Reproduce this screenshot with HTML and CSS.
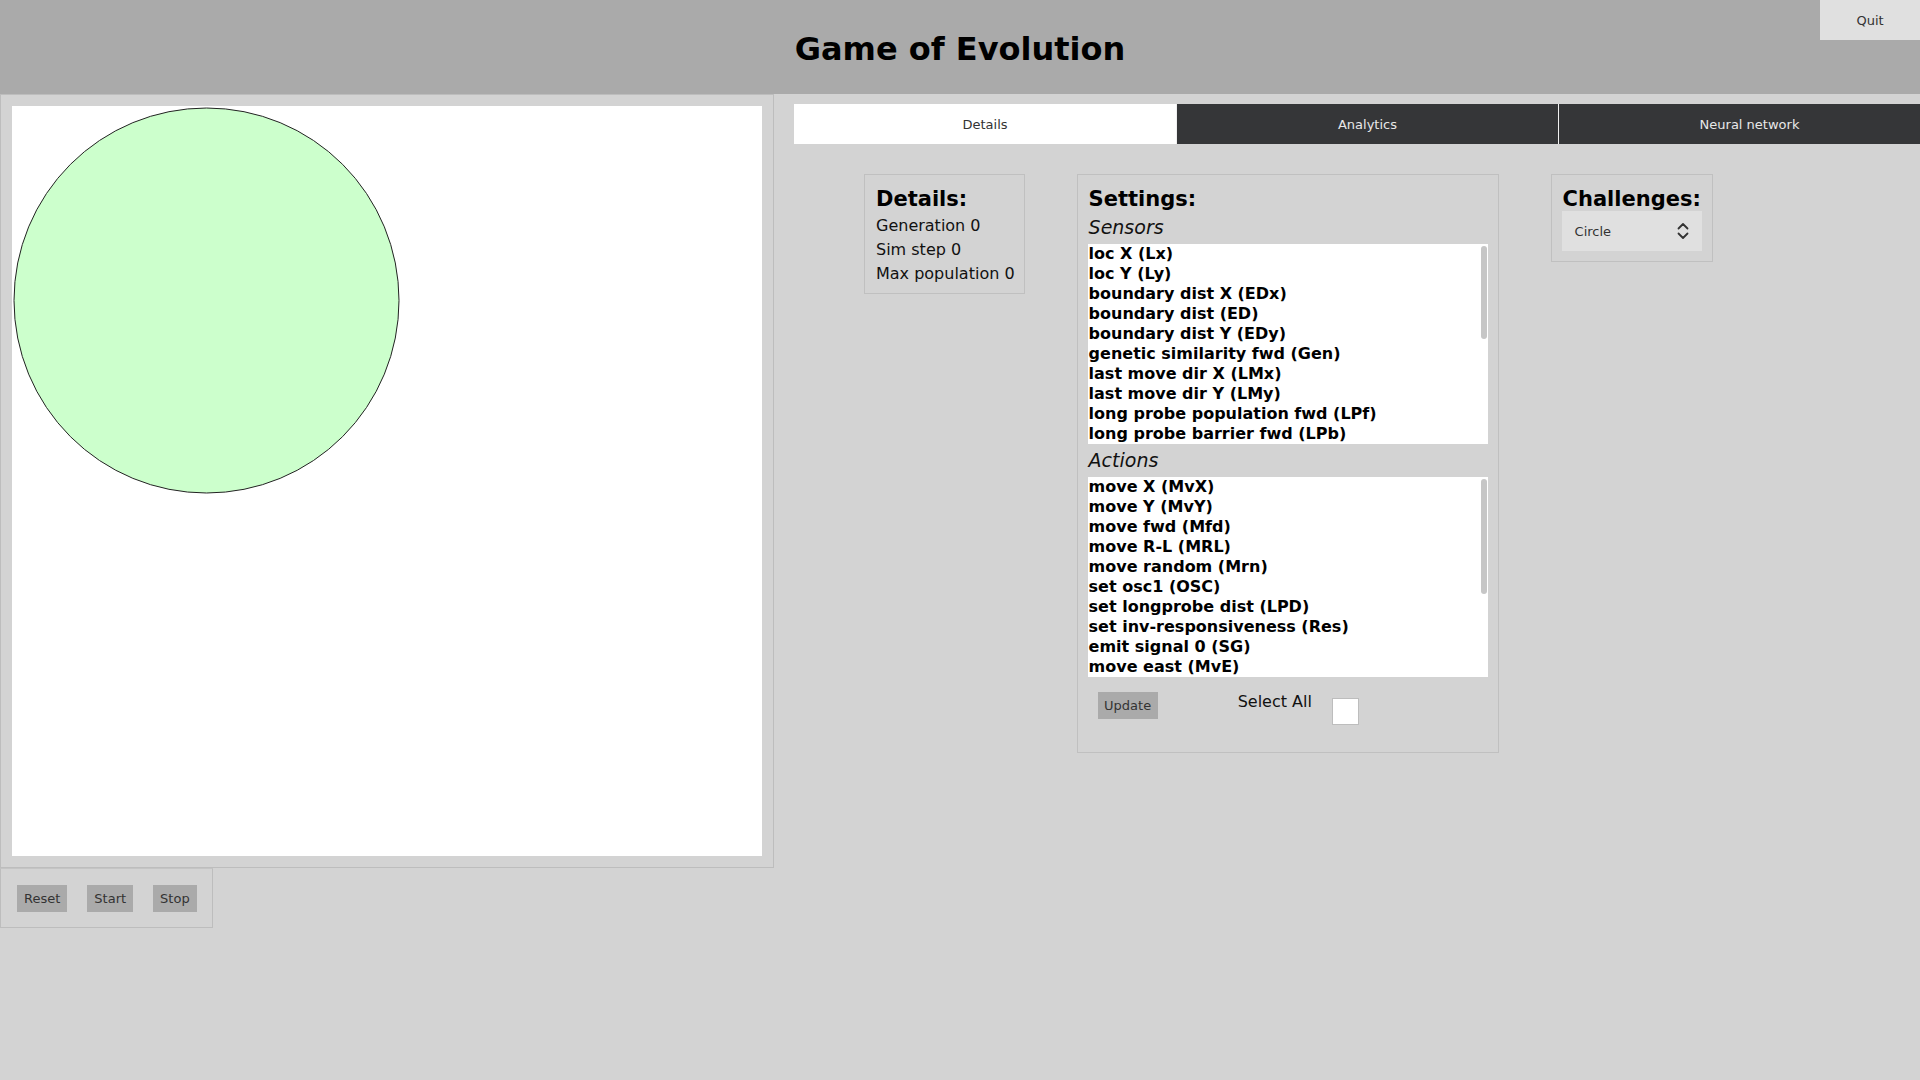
FILE: index.html
```html
<!DOCTYPE html>
<html lang="en">
<head>
<meta charset="utf-8">
<title>Game of Evolution</title>
<link rel="stylesheet" href="styles.css">
</head>
<body>
<header class="topbar">
  <div class="spacer"></div>
  <h1 class="title">Game of Evolution</h1>
  <button class="quit">Quit</button>
</header>
<main class="layout">
  <section class="left">
    <div class="sim-panel">
      <div class="canvas">
        <svg width="750" height="750" viewBox="0 0 750 750">
          <circle cx="194.5" cy="194.5" r="192.5" fill="#ccffcc" stroke="#222" stroke-width="1"/>
        </svg>
      </div>
    </div>
    <div class="controls">
      <button class="btn">Reset</button>
      <button class="btn">Start</button>
      <button class="btn">Stop</button>
    </div>
  </section>
  <section class="right">
    <nav class="tabs">
      <div class="tab active">Details</div>
      <div class="tab">Analytics</div>
      <div class="tab">Neural network</div>
    </nav>
    <div class="cards">
      <div class="card details">
        <h2 class="card-title">Details:</h2>
        <div class="stats">
          <div class="stat">Generation 0</div>
          <div class="stat">Sim step 0</div>
          <div class="stat">Max population 0</div>
        </div>
      </div>
      <div class="card settings">
        <h2 class="card-title shifted">Settings:</h2>
        <div class="sub sub-sensors">Sensors</div>
        <div class="listbox">
          <div class="items">
            <div class="item">loc X (Lx)</div>
            <div class="item">loc Y (Ly)</div>
            <div class="item">boundary dist X (EDx)</div>
            <div class="item">boundary dist (ED)</div>
            <div class="item">boundary dist Y (EDy)</div>
            <div class="item">genetic similarity fwd (Gen)</div>
            <div class="item">last move dir X (LMx)</div>
            <div class="item">last move dir Y (LMy)</div>
            <div class="item">long probe population fwd (LPf)</div>
            <div class="item">long probe barrier fwd (LPb)</div>
            <div class="item">population density (Pop)</div>
            <div class="item">population gradient fwd (Pfd)</div>
            <div class="item">population gradient left-right (Plr)</div>
            <div class="item">osc1 (Osc)</div>
            <div class="item">age (Age)</div>
            <div class="item">short probe barrier fwd-rev (Bfd)</div>
            <div class="item">short probe barrier left-right (Blr)</div>
            <div class="item">random (Rnd)</div>
            <div class="item">signal 0 (Sg)</div>
            <div class="item">signal 0 fwd (Sfd)</div>
            <div class="item">signal 0 LR (Slr)</div>
          </div>
          <div class="thumb thumb-sensors"></div>
        </div>
        <div class="sub sub-actions">Actions</div>
        <div class="listbox">
          <div class="items">
            <div class="item">move X (MvX)</div>
            <div class="item">move Y (MvY)</div>
            <div class="item">move fwd (Mfd)</div>
            <div class="item">move R-L (MRL)</div>
            <div class="item">move random (Mrn)</div>
            <div class="item">set osc1 (OSC)</div>
            <div class="item">set longprobe dist (LPD)</div>
            <div class="item">set inv-responsiveness (Res)</div>
            <div class="item">emit signal 0 (SG)</div>
            <div class="item">move east (MvE)</div>
            <div class="item">move west (MvW)</div>
            <div class="item">move north (MvN)</div>
            <div class="item">move south (MvS)</div>
            <div class="item">move left (MvL)</div>
            <div class="item">move right (MvR)</div>
            <div class="item">move reverse (Mrv)</div>
            <div class="item">kill fwd (KlF)</div>
          </div>
          <div class="thumb thumb-actions"></div>
        </div>
        <div class="settings-foot">
          <button class="btn update">Update</button>
          <span class="select-all">Select All</span>
          <span class="check"></span>
        </div>
      </div>
      <div class="card challenges">
        <h2 class="card-title shifted">Challenges:</h2>
        <div class="picker">
          <span class="picker-value">Circle</span>
          <svg class="chevrons" width="12" height="20" viewBox="0 0 12 20">
            <polyline points="1.5,7.5 6,3 10.5,7.5" fill="none" stroke="#333" stroke-width="1.8" stroke-linecap="round" stroke-linejoin="round"/>
            <polyline points="1.5,12.5 6,17 10.5,12.5" fill="none" stroke="#333" stroke-width="1.8" stroke-linecap="round" stroke-linejoin="round"/>
          </svg>
        </div>
      </div>
    </div>
  </section>
</main>
</body>
</html>
```

FILE: styles.css
```css
html, body {
  margin: 0;
  padding: 0;
  overflow: hidden;
}

body {
  background: #d3d3d3;
  font-family: "DejaVu Sans", "Liberation Sans", sans-serif;
  color: #000;
  width: 1920px;
  height: 1080px;
}

.topbar {
  display: grid;
  grid-template-columns: 1fr auto 1fr;
  align-items: center;
  height: 94px;
  background: #aaaaaa;
}

.title {
  margin: 4px 0 0;
  font-size: 32px;
  font-weight: bold;
  line-height: normal;
  color: #000;
}

.quit {
  justify-self: end;
  align-self: start;
  width: 100px;
  height: 40px;
  padding: 0;
  border: 0;
  background: #e0e0e0;
  color: #333;
  font-family: "DejaVu Sans", sans-serif;
  font-size: 13px;
}

.layout {
  display: flex;
  align-items: flex-start;
}

.left {
  flex: 0 0 774px;
  width: 774px;
}

.sim-panel {
  box-sizing: border-box;
  width: 774px;
  padding: 11px;
  border: 1px solid #bdbdbd;
}

.canvas {
  width: 750px;
  height: 750px;
  background: #fff;
}

.canvas svg {
  display: block;
}

.controls {
  display: inline-flex;
  gap: 20px;
  padding: 16px 15px 15px 16px;
  border: 1px solid #bdbdbd;
  border-top-color: #c4c4c4;
}

.btn {
  padding: 6px 7px;
  border: 0;
  background: #aaaaaa;
  color: #333;
  font-family: "DejaVu Sans", sans-serif;
  font-size: 13px;
  line-height: 15px;
}

.right {
  flex: 1;
  min-width: 0;
  padding: 10px 0 0 20px;
}

.tabs {
  display: flex;
  width: 1146px;
  height: 40px;
}

.tab {
  box-sizing: border-box;
  flex: 0 0 382px;
  display: flex;
  align-items: center;
  justify-content: center;
  background: #353638;
  color: #e8e8e8;
  font-size: 13px;
  border-left: 1px solid #f0f0f0;
}

.tab.active {
  background: #fff;
  color: #333;
  border-left: 0;
}

.cards {
  display: flex;
  align-items: flex-start;
  gap: 52px;
  margin-top: 30px;
  padding-left: 70px;
}

.card {
  border: 1px solid #c0c0c0;
}

.card-title {
  margin: 0;
  font-size: 21px;
  line-height: 24px;
  font-weight: bold;
}

.card-title.shifted {
  padding-left: 1px;
}

.details {
  padding: 12px 9px 7px 11px;
}

.stats {
  margin-top: 3px;
}

.stat {
  font-size: 16px;
  line-height: 24px;
  color: #111;
}

.settings {
  padding: 12px 10px 27px;
}

.sub {
  font-style: italic;
  font-size: 19px;
  line-height: 24px;
  color: #111;
  padding-left: 1px;
}

.sub-sensors {
  margin: 4px 0 5px;
}

.sub-actions {
  margin: 4px 0 5px;
}

.listbox {
  position: relative;
  width: 400px;
  height: 200px;
  background: #fff;
  overflow: hidden;
}

.item {
  padding-left: 1px;
  font-size: 16px;
  font-weight: bold;
  line-height: 20px;
  white-space: nowrap;
  color: #000;
}

.thumb {
  position: absolute;
  top: 2px;
  right: 1px;
  width: 6px;
  border-radius: 3px;
  background: #c6c6c6;
}

.thumb-sensors {
  height: 93px;
}

.thumb-actions {
  height: 115px;
}

.settings-foot {
  display: flex;
  align-items: flex-start;
  margin-top: 15px;
}

.update {
  margin-left: 10px;
  padding: 6px 6.5px;
}

.select-all {
  margin-left: 80px;
  font-size: 16px;
  line-height: 20px;
  color: #111;
}

.check {
  box-sizing: border-box;
  width: 27px;
  height: 27px;
  margin: 6px 0 0 20px;
  border: 1px solid #bdbdbd;
  background: #fff;
}

.challenges {
  padding: 12px 10px 10px;
}

.picker {
  box-sizing: border-box;
  display: flex;
  align-items: center;
  justify-content: space-between;
  width: 140px;
  height: 40px;
  padding: 0 13px 0 13px;
  background: #e0e0e0;
  color: #333;
  font-size: 13px;
}

.chevrons {
  display: block;
}
```
